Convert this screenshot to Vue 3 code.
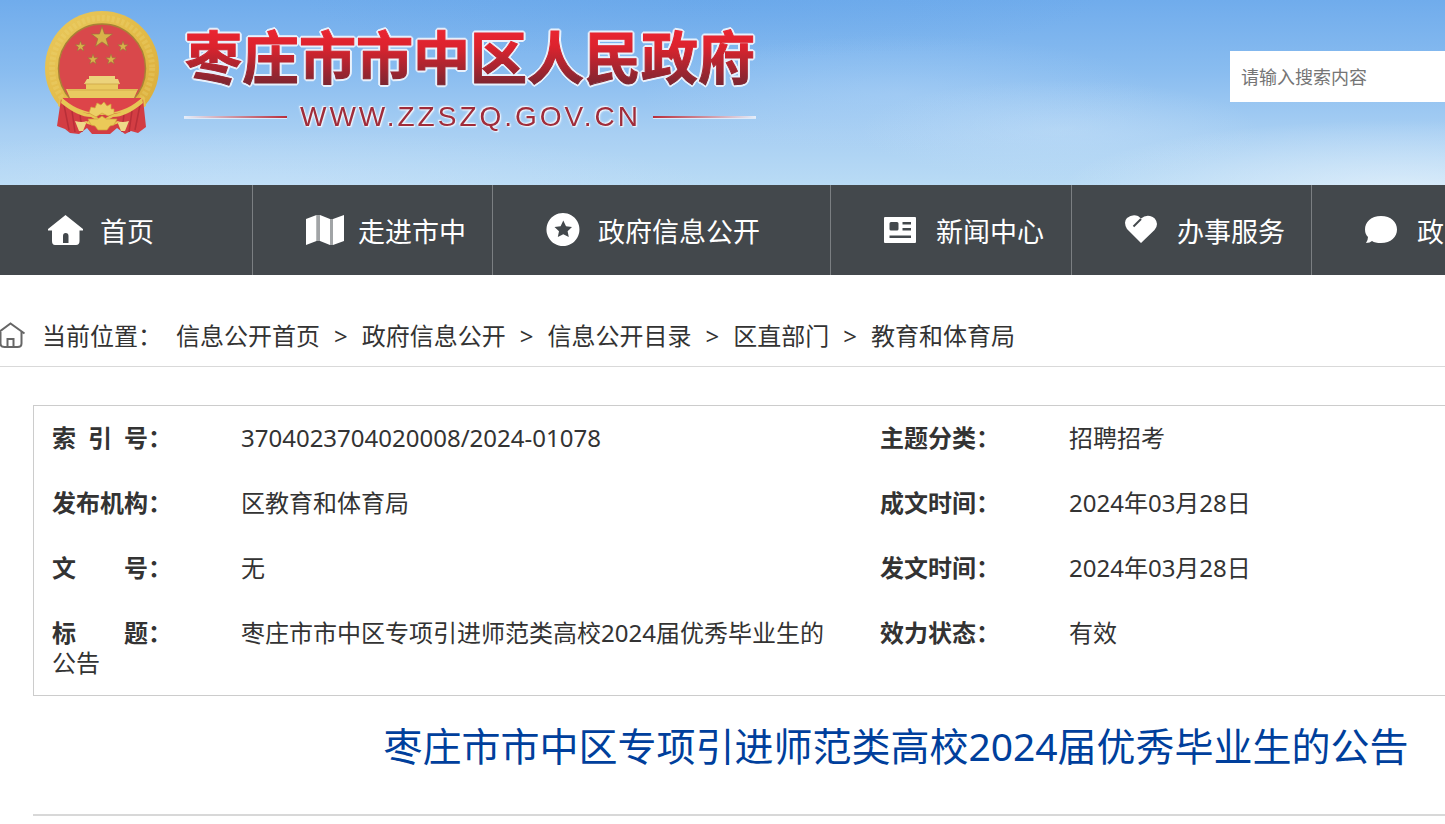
<script setup>
const star = '0,-10 2.3,-3.2 9.5,-3.1 3.8,1.2 5.9,8.1 0,4 -5.9,8.1 -3.8,1.2 -9.5,-3.1 -2.3,-3.2'

const smallStars = [
  { x: 80.5, y: 46.5 },
  { x: 123, y: 46.5 },
  { x: 93, y: 59.5 },
  { x: 111, y: 59.5 },
]

const nav = [
  { label: '首页', icon: 'home', size: 'first' },
  { label: '走进市中', icon: 'map', size: 'normal' },
  { label: '政府信息公开', icon: 'star', size: 'wide' },
  { label: '新闻中心', icon: 'news', size: 'medium' },
  { label: '办事服务', icon: 'heart', size: 'normal' },
  { label: '政', icon: 'chat', size: 'normal' },
]

const crumbs = ['信息公开首页', '政府信息公开', '信息公开目录', '区直部门', '教育和体育局']

const facts = [
  { label: '索\u2002引\u2002号：', value: '3704023704020008/2024-01078' },
  { label: '主题分类：', value: '招聘招考' },
  { label: '发布机构：', value: '区教育和体育局' },
  { label: '成文时间：', value: '2024年03月28日' },
  { label: '文\u3000\u3000号：', value: '无' },
  { label: '发文时间：', value: '2024年03月28日' },
  { label: '标\u3000\u3000题：', value: '枣庄市市中区专项引进师范类高校2024届优秀毕业生的公告' },
  { label: '效力状态：', value: '有效' },
]
</script>

<template>
  <div class="viewport">
    <div class="page">
      <header class="banner">
        <svg class="emblem" viewBox="30 0 150 145" width="150" height="145" aria-hidden="true">
          <defs>
            <linearGradient id="gold" x1="0" y1="0" x2="1" y2="1">
              <stop offset="0" stop-color="#e9c95e" />
              <stop offset="0.5" stop-color="#e3bb48" />
              <stop offset="1" stop-color="#d9ab3a" />
            </linearGradient>
          </defs>
          <ellipse cx="102" cy="68" rx="57" ry="57" fill="url(#gold)" />
          <ellipse cx="102" cy="68" rx="50" ry="50" fill="none" stroke="#f0d777" stroke-width="6" stroke-dasharray="3 2" opacity="0.3" />
          <ellipse cx="102" cy="68.5" rx="43.5" ry="44.5" fill="#d9484b" stroke="#a98235" stroke-width="1.5" />
          <path d="M61 98 L143 98 L143 102 Q128 112 102 114 Q76 112 61 102Z" fill="#dd4449" />
          <path d="M60 96 Q80 115 102 112 Q124 115 144 96 L146 106 Q126 119 102 118 Q78 119 58 106Z" fill="#e6c355" />
          <path d="M61 99 Q65 108 79 112 L102 115 L125 112 Q139 108 143 99 L146 127 L138 133 L131 131 L125 134 L117 128 L110 134 L92 134 L87 128 L79 134 L70 133 L65 129 L57 126Z" fill="#d33d43" />
          <path d="M64 105 L69 130 M72 111 L75 132 M80 114 L82 132 M140 105 L135 130 M132 111 L129 132 M124 114 L122 132" stroke="#b82f38" stroke-width="1.5" />
          <path d="M62 98 Q78 113 91 114 L102 120 L113 114 Q126 113 142 98 L143 103 Q126 117 113 117 L104 122 L100 122 L91 117 Q78 117 61 103Z" fill="#e7c655" />
          <path d="M75 121 Q82 123 87 121 L83 131 L79 131Z M129 121 Q122 123 117 121 L121 131 L125 131Z" fill="#eed889" />
          <path d="M84 122 Q91 121 95 118 L109 118 Q113 121 120 122 Q113 127 108 124 L96 124 Q91 127 84 122Z" fill="#e7c655" />
          <path d="M89 113 L91 107 L95 108 L97 103 L101 105 L104 102 L107 106 L111 104 L111 109 L114 109 L114 114 L108 116 L102 113 L96 117Z" fill="#edcf66" stroke="#d4a43d" stroke-width="0.7" />
          <path d="M88 119 L98 119 L102 116 L106 119 L117 119 L114 125 L110 126 L107 130 L98 130 L95 126 L91 125Z" fill="#ebc958" stroke="#cf9e38" stroke-width="0.7" />
          <path d="M89 76 H115 V79 H118 L120 84 H84 L87 79 H89Z" fill="#ecd37b" />
          <path d="M86 84 H118 V89 H138 L134 98 H70 L66 89 H86Z" fill="#e9ca60" />
          <path d="M85 84 H119 M68 90 H137" stroke="#cda446" stroke-width="0.8" />
          <polygon :points="star" transform="translate(102 37.5) scale(1.1)" fill="#d8b14a" stroke="#96743a" stroke-width="0.6" />
          <polygon v-for="s in smallStars" :key="`${s.x}-${s.y}`" :points="star" :transform="`translate(${s.x} ${s.y}) scale(0.55)`" class="minor" />
        </svg>

        <svg class="wordmark" viewBox="0 0 590 145" width="590" height="145" role="img" aria-label="枣庄市市中区人民政府">
          <defs>
            <linearGradient id="red" gradientUnits="userSpaceOnUse" x1="0" y1="30" x2="0" y2="85">
              <stop offset="0" stop-color="#ea2531" />
              <stop offset="0.3" stop-color="#dc232e" />
              <stop offset="1" stop-color="#7c2631" />
            </linearGradient>
            <linearGradient id="ruleLeft" x1="0" x2="1">
              <stop offset="0" stop-color="#e4eefb" />
              <stop offset="1" stop-color="#b82d3a" />
            </linearGradient>
            <linearGradient id="ruleRight" x1="0" x2="1">
              <stop offset="0" stop-color="#b82d3a" />
              <stop offset="1" stop-color="#e4eefb" />
            </linearGradient>
          </defs>
          <text class="org" x="5" y="79">枣庄市市中区人民政府</text>
          <text class="domain" x="120" y="126">WWW.ZZSZQ.GOV.CN</text>
          <rect x="4" y="116" width="103" height="2" fill="url(#ruleLeft)" class="rule" />
          <rect x="473" y="116" width="103" height="2" fill="url(#ruleRight)" class="rule" />
        </svg>

        <form class="search" @submit.prevent>
          <input type="text" aria-label="请输入搜索内容" placeholder="请输入搜索内容" />
        </form>
      </header>

      <nav class="menu">
        <a v-for="item in nav" :key="item.icon" href="#" :class="['entry', item.size]">
          <svg class="icon" viewBox="0 0 38 36" width="38" height="36" aria-hidden="true">
            <path v-if="item.icon === 'home'" fill-rule="evenodd" d="M17.5 3 L35 17 V18.5 H31.5 V29 Q31.5 33 28 33 H7 Q4 33 4 29 V18.5 H0 V17Z M15 31 H20.5 V24 Q20.5 21 17.7 21 Q15 21 15 24Z" />
            <g v-else-if="item.icon === 'map'">
              <path d="M0 7 L10.5 3 V29 L0 33Z M14 3 L24 7 V33 L14 29Z M27 7 L38 3 V29 L27 33Z" />
              <path d="M10.5 3 L14 3 V29 L10.5 29Z M24 7 L27 7 V33 H24Z" opacity="0.5" />
            </g>
            <path v-else-if="item.icon === 'star'" fill-rule="evenodd" d="M17 1 A16.5 16.5 0 1 1 16.9 1Z M17.3 8.5 L14.6 14.2 L8.5 15 L13 19.2 L11.8 25 L17.3 22.2 L22.8 25 L21.6 19.2 L26 15 L20 14.2Z" />
            <path v-else-if="item.icon === 'news'" fill-rule="evenodd" d="M1 5 H31 Q32 5 32 6 V30 Q32 31 31 31 H1 Q0 31 0 30 V6 Q0 5 1 5Z M7 10 Q5.5 10 5.5 11.5 V17 Q5.5 18.5 7 18.5 H13 Q14.5 18.5 14.5 17 V11.5 Q14.5 10 13 10Z M18.5 10 V12.5 H27 V10Z M18.5 16 V18.5 H27 V16Z M5.5 23.5 V26 H27 V23.5Z" />
            <g v-else-if="item.icon === 'heart'">
              <path d="M16 31 L2 17 Q-2 10 2 6 Q7 2 13 4 L16 6.5 Q20 3 25 4 Q31 5 32 12 Q32 15 29.5 18Z" />
              <path d="M16 7 L8.5 14.5" fill="none" stroke="#43484c" stroke-width="2" />
            </g>
            <path v-else d="M16 4 C26 4 32 10 32 17.5 C32 25 26 31 16 31 Q10 31 7 29 Q5 31 1 31 Q3 28 3 25 Q0 22 0 17.5 C0 10 6 4 16 4Z" />
          </svg>
          <span>{{ item.label }}</span>
        </a>
      </nav>

      <nav class="crumbs" aria-label="当前位置">
        <svg class="house" viewBox="0 0 26 28" width="26" height="28" aria-hidden="true">
          <path d="M-3 11.5 L10.5 1.5 L24.5 11.5 M0.5 10 V21.5 Q0.5 25 4.5 25 H17.5 Q21.5 25 21.5 21.5 V10 M7.5 25 V17 H13.5 V25" />
        </svg>
        <span class="here">当前位置：</span>
        <template v-for="(crumb, i) in crumbs" :key="crumb">
          <span v-if="i">&gt;</span>
          <a href="#">{{ crumb }}</a>
        </template>
      </nav>

      <main class="content">
        <dl class="facts">
          <div v-for="fact in facts" :key="fact.label" class="fact">
            <dt>{{ fact.label }}</dt>
            <dd>{{ fact.value }}</dd>
          </div>
        </dl>
        <h1>枣庄市市中区专项引进师范类高校2024届优秀毕业生的公告</h1>
        <hr />
      </main>
    </div>
  </div>
</template>

<style>
body {
  margin: 0;
  background: #fff;
}
</style>

<style scoped>
.viewport {
  overflow: hidden;
  font-family: "Noto Sans", "Noto Sans CJK SC", sans-serif;
  font-size: 24px;
  line-height: 30px;
  color: #333;
}

.page {
  min-width: 1792px;
}

a {
  color: inherit;
  text-decoration: none;
}

.banner {
  display: flex;
  align-items: flex-start;
  height: 185px;
  padding: 0 162px 0 30px;
  background:
    radial-gradient(ellipse 340px 70px at 1400px 190px, rgba(240, 247, 253, 0.6), transparent),
    radial-gradient(ellipse 200px 50px at 1060px 130px, rgba(200, 226, 249, 0.4), transparent),
    radial-gradient(ellipse 460px 60px at 260px 190px, rgba(205, 228, 250, 0.45), transparent),
    radial-gradient(ellipse 260px 60px at 900px 95px, rgba(180, 214, 247, 0.35), transparent),
    radial-gradient(ellipse 400px 60px at 700px 0, rgba(90, 158, 230, 0.25), transparent),
    linear-gradient(#70acec, #8abdf0 40%, #a8cff3 72%, #b9dbf5);
  box-sizing: border-box;
}

.minor {
  fill: #d8b14a;
  stroke: #96743a;
  stroke-width: 1;
}

.org {
  font: 700 57px "Noto Sans CJK SC", sans-serif;
  fill: url(#red);
  stroke: url(#red);
  stroke-width: 1;
  filter: drop-shadow(1px 1px 0 #e8f1fc) drop-shadow(-1px -1px 0 #e8f1fc) drop-shadow(1px -1px 0 #e8f1fc) drop-shadow(-1px 1px 0 #e8f1fc);
}

.domain {
  font: 28px "Liberation Sans", Arial, sans-serif;
  letter-spacing: 3px;
  fill: #a02c3a;
  filter: drop-shadow(1px 1px 0 #e8f1fc) drop-shadow(-1px -1px 0 #e8f1fc) drop-shadow(0 0 1px #e8f1fc);
}

.rule {
  filter: drop-shadow(0 1px 0 #dceafa);
}

.search {
  margin: 51px 0 0 auto;
}

.search input {
  display: block;
  width: 400px;
  height: 51px;
  padding: 0 11px;
  border: 0;
  border-radius: 0;
  box-sizing: border-box;
  background: #fff;
  font-family: inherit;
  font-size: 18px;
  color: #333;
}

.search input::placeholder {
  color: #757575;
}

.menu {
  display: flex;
  height: 90px;
  background: #43484c;
  color: #fff;
  font-size: 27px;
}

.entry {
  display: flex;
  flex: none;
  align-items: center;
  width: 240px;
  padding-left: 53px;
  border-right: 1px solid #7b7f82;
  box-sizing: border-box;
}

.entry.first {
  width: 253px;
  padding-left: 48px;
}

.entry.medium {
  width: 241px;
}

.entry.wide {
  width: 338px;
}

.entry span {
  padding-top: 3px;
}

.icon {
  flex: none;
  margin-right: 14px;
  fill: currentColor;
}

.crumbs {
  display: flex;
  align-items: center;
  gap: 14px;
  height: 60px;
  margin-top: 31px;
  border-bottom: 1px solid #d9d9d9;
}

.house {
  flex: none;
  margin-right: 2px;
  fill: none;
  stroke: #666;
  stroke-width: 2;
}

.content {
  margin: 38px 33px 0;
}

.facts {
  display: grid;
  grid-template-columns: 1fr 1fr;
  row-gap: 35px;
  margin: 0;
  padding: 17px 50px 17px 18px;
  border: 1px solid #ccc;
}

.fact {
  padding-right: 40px;
}

.fact dt {
  display: inline-block;
  width: 189px;
  font-weight: 700;
}

.fact dd {
  display: inline;
  margin: 0;
}

h1 {
  margin: 0;
  font-size: 39px;
  font-weight: 400;
  line-height: 100px;
  text-align: center;
  color: #003f9c;
}

hr {
  margin: 18px 0 0;
  border: 0;
  border-top: 2px solid #d8d8d8;
}
</style>
